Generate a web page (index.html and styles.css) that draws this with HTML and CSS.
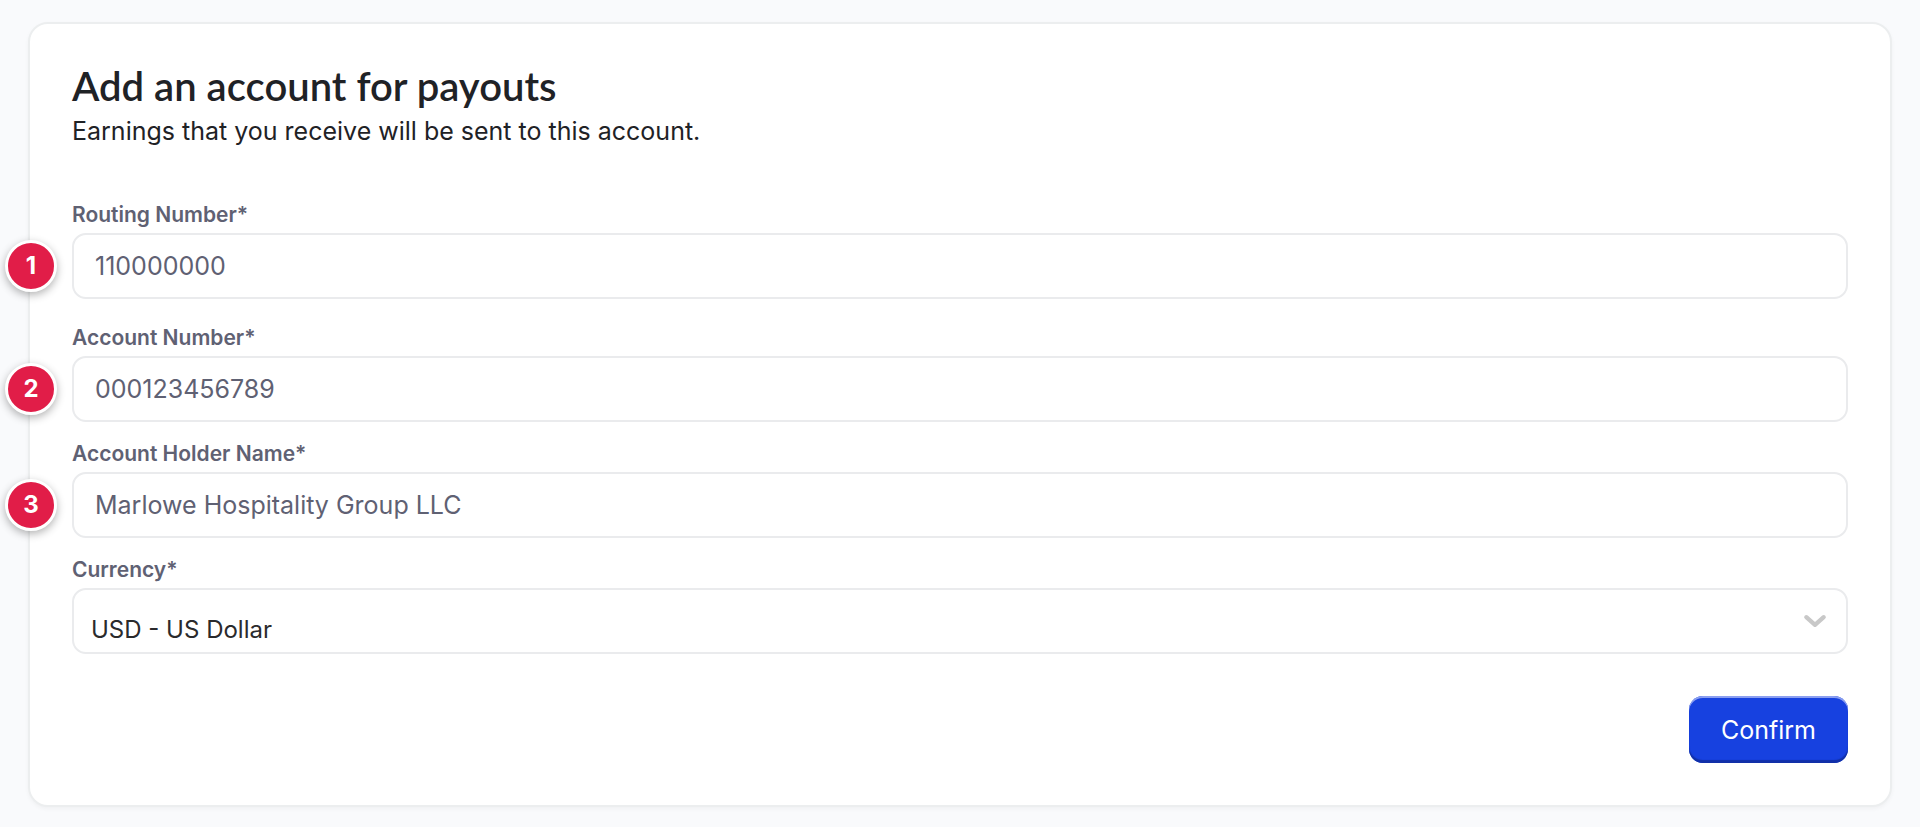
FILE: index.html
```html
<!DOCTYPE html>
<html lang="en">
<head>
  <meta charset="UTF-8">
  <meta name="viewport" content="width=device-width, initial-scale=1">
  <title>Add an account for payouts</title>
  <link rel="stylesheet" href="styles.css">
</head>
<body>
  <main class="card">
    <header class="card-header">
      <h1>Add an account for payouts</h1>
      <p>Earnings that you receive will be sent to this account.</p>
    </header>

    <form class="payout-form">
      <div class="field field-spaced">
        <label for="routing">Routing Number*</label>
        <div class="control">
          <span class="badge">1</span>
          <input type="text" id="routing" placeholder="110000000">
        </div>
      </div>

      <div class="field">
        <label for="account">Account Number*</label>
        <div class="control">
          <span class="badge">2</span>
          <input type="text" id="account" placeholder="000123456789">
        </div>
      </div>

      <div class="field">
        <label for="holder">Account Holder Name*</label>
        <div class="control">
          <span class="badge">3</span>
          <input type="text" id="holder" placeholder="Marlowe Hospitality Group LLC">
        </div>
      </div>

      <div class="field">
        <label for="currency">Currency*</label>
        <div class="control">
          <select id="currency">
            <option>USD - US Dollar</option>
          </select>
          <svg class="chevron" viewBox="0 0 24 24" aria-hidden="true">
            <path d="M4 8.5 12 15.5 20 8.5"/>
          </svg>
        </div>
      </div>

      <div class="actions">
        <button type="submit">Confirm</button>
      </div>
    </form>
  </main>
</body>
</html>
```

FILE: styles.css
```css
* {
  box-sizing: border-box;
}

body {
  margin: 0;
  padding: 22px 28px;
  background-color: #f9fafc;
  color: #1f2226;
  font-family: Inter, "Liberation Sans", sans-serif;
  font-size: 25px;
}

.card {
  padding: 40px 42px 42px;
  background-color: #fff;
  border: 2px solid #eceeef;
  border-radius: 20px;
  box-shadow: 0 2px 4px rgba(0, 0, 0, 0.04);
}

.card-header {
  margin-bottom: 51px;
}

.card-header h1 {
  margin: 0 0 4px;
  font-family: Lato, "Open Sans", sans-serif;
  font-size: 40px;
  font-weight: 600;
  line-height: 44px;
}

.card-header p {
  margin: 0;
  line-height: 38px;
}

/* Form fields */
.field {
  margin-bottom: 18px;
}

.field-spaced {
  margin-bottom: 25px;
}

.field label {
  display: block;
  margin-bottom: 4px;
  color: #5f6173;
  font-size: 21px;
  font-weight: 600;
  line-height: 28px;
}

.control {
  position: relative;
}

input,
select {
  display: block;
  width: 100%;
  height: 66px;
  padding: 0 21px;
  background-color: #fff;
  border: 2px solid #eaebed;
  border-radius: 14px;
  color: #2a2a2c;
  font-family: inherit;
  font-size: 25px;
}

input::placeholder {
  color: #5f6173;
  opacity: 1;
}

select {
  padding: 17px 60px 0 17px;
  font-size: 24px;
  appearance: none;
}

.chevron {
  position: absolute;
  top: 20px;
  right: 20px;
  width: 26px;
  height: 26px;
  fill: none;
  stroke: #c8c8c8;
  stroke-width: 4;
  stroke-linecap: round;
  stroke-linejoin: round;
  pointer-events: none;
}

/* Step markers over the card edge */
.badge {
  position: absolute;
  top: 7px;
  left: -67px;
  width: 52px;
  height: 52px;
  background-color: #e11d48;
  border: 3px solid #fff;
  border-radius: 50%;
  box-shadow: 0 3px 8px rgba(0, 0, 0, 0.3);
  color: #fff;
  font-size: 24px;
  font-weight: 700;
  line-height: 46px;
  text-align: center;
}

.actions {
  display: flex;
  justify-content: flex-end;
  margin-top: 42px;
}

button {
  height: 67px;
  padding: 0 32px;
  background-color: #1741e0;
  border: 0;
  border-radius: 14px;
  box-shadow: inset 0 2px 0 #8b9ff0, inset 0 -3px 1px #1130a8;
  color: #fff;
  font-family: inherit;
  font-size: 25px;
}
```
